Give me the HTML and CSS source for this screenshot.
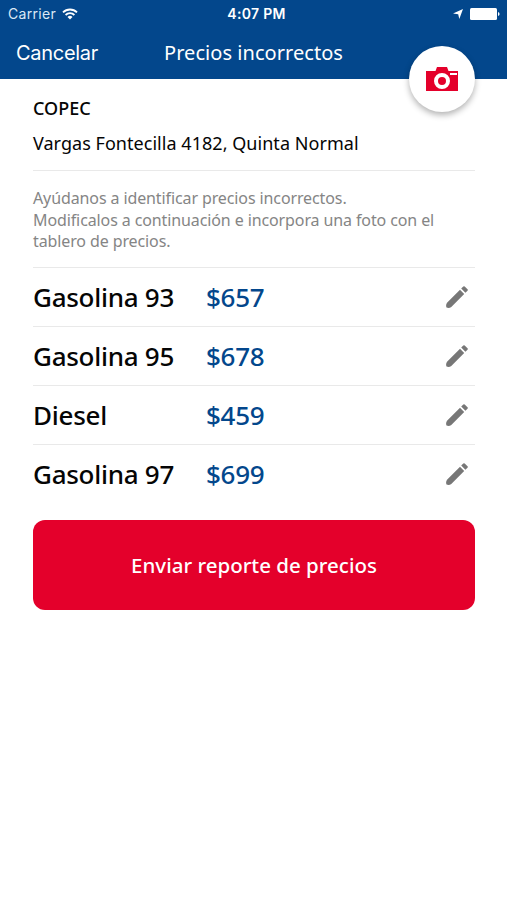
FILE: index.html
```html
<!DOCTYPE html>
<html lang="es">
<head>
    <meta charset="UTF-8">
    <meta name="viewport" content="width=device-width, initial-scale=1.0">
    <title>Precios incorrectos</title>
    <link rel="stylesheet" href="styles.css">
</head>
<body>

    <header class="header">
        <div class="status-bar">
            <div class="carrier">
                <span>Carrier</span>
                <svg class="wifi" viewBox="0 0 16 12" width="16" height="12" fill="none" stroke="#fff" stroke-width="1.8">
                    <path d="M1 4.4a9.9 9.9 0 0 1 14 0"/>
                    <path d="M3.6 7a6.2 6.2 0 0 1 8.8 0"/>
                    <path d="M8 11.6L5.5 9a3.5 3.5 0 0 1 5 0z" fill="#fff" stroke="none"/>
                </svg>
            </div>
            <div class="time">4:07 PM</div>
            <div class="indicators">
                <svg viewBox="0 0 10 10" width="10" height="10" fill="#fff">
                    <path d="M10 0L6.3 10 5.2 5.2 0 4.6z"/>
                </svg>
                <svg viewBox="0 0 30 12" width="30" height="12" fill="#fff">
                    <rect x="0" y="0" width="27" height="12" rx="1.5"/>
                    <path d="M28 4q1.6.5 1.6 2T28 8z"/>
                </svg>
            </div>
        </div>
        <nav class="nav-bar">
            <a class="cancel">Cancelar</a>
            <h1 class="title">Precios incorrectos</h1>
        </nav>
        <button class="camera-btn" aria-label="Agregar foto">
            <svg viewBox="0 0 32 24" width="32" height="24">
                <path d="M0 4h9.500L11 0h10l1.500 4H32v20H0z" fill="#e4002b"/>
                <circle cx="16" cy="14" r="6" fill="#e4002b" stroke="#fff" stroke-width="4"/>
                <rect x="24" y="6" width="7" height="2" fill="#fff"/>
            </svg>
        </button>
    </header>

    <main class="content">
        <section class="station">
            <h2 class="station-name">COPEC</h2>
            <p class="station-address">Vargas Fontecilla 4182, Quinta Normal</p>
        </section>

        <p class="help">Ayúdanos a identificar precios incorrectos.<br>Modificalos a continuación e incorpora una foto con el<br>tablero de precios.</p>

        <ul class="prices">
            <li class="price-row">
                <span class="fuel">Gasolina 93</span>
                <span class="price">$657</span>
                <svg class="pencil" viewBox="0 0 22 22" width="22" height="22"><path d="M.5 21.500Q-.5 19 1 16.700L14 3.800 18.200 8 5.300 21Q3 22.500.5 21.500zM15.200 2.600L17.300.5q.7-.7 1.400 0l2.800 2.800q.7.700 0 1.400l-2.100 2.100z"/></svg>
            </li>
            <li class="price-row">
                <span class="fuel">Gasolina 95</span>
                <span class="price">$678</span>
                <svg class="pencil" viewBox="0 0 22 22" width="22" height="22"><path d="M.5 21.500Q-.5 19 1 16.700L14 3.800 18.200 8 5.300 21Q3 22.500.5 21.500zM15.200 2.600L17.300.5q.7-.7 1.400 0l2.800 2.800q.7.700 0 1.400l-2.100 2.100z"/></svg>
            </li>
            <li class="price-row">
                <span class="fuel">Diesel</span>
                <span class="price">$459</span>
                <svg class="pencil" viewBox="0 0 22 22" width="22" height="22"><path d="M.5 21.500Q-.5 19 1 16.700L14 3.800 18.200 8 5.300 21Q3 22.500.5 21.500zM15.200 2.600L17.300.5q.7-.7 1.400 0l2.800 2.800q.7.700 0 1.400l-2.100 2.100z"/></svg>
            </li>
            <li class="price-row">
                <span class="fuel">Gasolina 97</span>
                <span class="price">$699</span>
                <svg class="pencil" viewBox="0 0 22 22" width="22" height="22"><path d="M.5 21.500Q-.5 19 1 16.700L14 3.800 18.200 8 5.300 21Q3 22.500.5 21.500zM15.200 2.600L17.300.5q.7-.7 1.400 0l2.800 2.800q.7.700 0 1.400l-2.100 2.100z"/></svg>
            </li>
        </ul>

        <button class="submit-btn">Enviar reporte de precios</button>
    </main>

</body>
</html>
```
FILE: styles.css
```css
* {
    box-sizing: border-box;
    margin: 0;
    padding: 0;
}

body {
    font-family: 'Noto Sans', sans-serif;
    background: #fff;
    color: #050505;
}

.header {
    position: relative;
    height: 79px;
    background: #03478c;
    color: #fff;
}

.status-bar {
    display: grid;
    grid-template-columns: 1fr auto 1fr;
    align-items: center;
    height: 27px;
    padding: 0 7px 0 8px;
    font-family: Inter, sans-serif;
    font-size: 14px;
}

.carrier {
    display: flex;
    align-items: center;
    gap: 6px;
    color: #dbe8f5;
    letter-spacing: 0.3px;
}

.time {
    padding-left: 5px;
    font-weight: 600;
    letter-spacing: 0.3px;
}

.indicators {
    display: flex;
    justify-content: flex-end;
    align-items: center;
    gap: 7px;
}

.nav-bar {
    display: grid;
    grid-template-columns: 1fr auto 1fr;
    align-items: center;
    height: 50px;
    padding: 0 16px;
}

.cancel {
    padding-top: 1px;
    font-family: Inter, sans-serif;
    font-size: 20px;
    letter-spacing: -0.3px;
}

.title {
    font-size: 20px;
    font-weight: 400;
    letter-spacing: 0.05px;
}

.camera-btn {
    position: absolute;
    top: 46px;
    right: 32px;
    width: 66px;
    height: 66px;
    display: flex;
    align-items: center;
    justify-content: center;
    border: none;
    border-radius: 50%;
    background: #fff;
    box-shadow: 0 3px 6px rgba(0,0,0,0.3);
}

.content { padding: 0 32px 0 33px; }

.station {
    height: 92px;
    padding-top: 16px;
    border-bottom: 1px solid #e9e9e9;
}

.station-name {
    font-size: 18px;
    font-weight: 500;
    line-height: 26px;
}

.station-address {
    margin-top: 9px;
    font-size: 18px;
    line-height: 26px;
    letter-spacing: 0.04px;
}

.help {
    height: 97px;
    padding-top: 17px;
    border-bottom: 1px solid #e9e9e9;
    font-size: 16px;
    line-height: 21.6px;
    letter-spacing: -0.11px;
    color: #858585;
}

.prices { list-style: none; }

.price-row {
    display: flex;
    align-items: center;
    height: 59px;
    padding-right: 7px;
    padding-bottom: 1px;
    border-bottom: 1px solid #e9e9e9;
    font-size: 26px;
    font-weight: 500;
    letter-spacing: -0.27px;
}
.price-row:last-child { border-bottom-color: transparent; }

.fuel { width: 173px; }
.price { color: #03478c; }

.pencil {
    margin-left: auto;
    fill: #777;
}

.submit-btn {
    display: block;
    width: 100%;
    height: 90px;
    margin-top: 16px;
    border: none;
    border-radius: 12px;
    background: #e4002b;
    color: #fff;
    font-family: inherit;
    font-size: 20.5px;
    font-weight: 500;
}
```
